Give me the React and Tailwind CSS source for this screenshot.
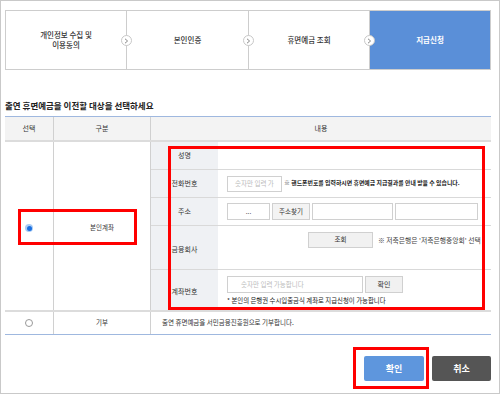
import React from "react";

function Chevron() {
  return (
    <div className="absolute right-[-6px] top-[24px] z-10 w-[11px] h-[11px] rounded-full bg-white border border-[#c8c8c8] flex items-center justify-center">
      <svg width="5" height="6" viewBox="0 0 5 6"><path d="M1 0.8 L3.6 3 L1 5.2" fill="none" stroke="#888" strokeWidth="1" /></svg>
    </div>
  );
}

function SubRow({ label, h, children, last }) {
  return (
    <div className={`flex ${h} ${last ? "" : "border-b border-[#d9d9d9]"}`}>
      <div className="w-[67px] bg-[#eff1f4] flex items-center justify-center text-[7px] text-[#333]">{label}</div>
      <div className="flex-1 pl-[9px] flex flex-col justify-center">{children}</div>
    </div>
  );
}

export default function App() {
  return (
    <div className="relative w-[500px] h-[394px] border border-[#c9c9c9] bg-white font-['Noto_Sans_CJK_KR',sans-serif] text-[#333] overflow-hidden">
      {/* steps */}
      <div className="ml-[4px] mt-[9px] w-[486px] h-[60px] border border-[#cdcdcd] flex">
        <div className="relative w-[121px] border-r border-[#cdcdcd] flex items-center justify-center text-center text-[7.5px] leading-[10px] font-medium text-[#333]">
          <span>개인정보 수집 및<br />이용동의</span>
          <Chevron />
        </div>
        <div className="relative w-[122px] border-r border-[#cdcdcd] flex items-center justify-center text-[7.5px] font-medium text-[#333]">
          본인인증
          <Chevron />
        </div>
        <div className="relative w-[121px] border-r border-[#cdcdcd] flex items-center justify-center text-[7.5px] font-medium text-[#333]">
          휴면예금 조회
          <Chevron />
        </div>
        <div className="w-[120px] bg-[#5a8fd8] flex items-center justify-center text-[7.5px] font-bold text-white">
          지급신청
        </div>
      </div>

      {/* title */}
      <div className="mt-[29px] pl-[4px] h-[12px] leading-[12px] text-[8.5px] font-bold text-[#222]">
        출연 휴면예금을 이전할 대상을 선택하세요
      </div>

      {/* table */}
      <div className="ml-[4px] mt-[5px] w-[486px]">
        <div className="border-t border-[#9fb8df]">
          <div className="flex h-[25px] bg-[#f3f3f3] border-b-2 border-[#dcdcdc] text-[7px] text-[#333]">
            <div className="w-[49px] border-r border-[#d0d0d0] flex items-center justify-center">선택</div>
            <div className="w-[97px] border-r border-[#d0d0d0] flex items-center justify-center">구분</div>
            <div className="flex-1 flex items-center justify-center">내용</div>
          </div>

          <div className="flex h-[168px]">
            <div className="w-[49px] border-r border-[#d0d0d0] flex items-center justify-center pt-[4px]">
              <div className="w-[8px] h-[8px] rounded-full bg-[#a9ccf5] flex items-center justify-center">
                <div className="w-[5px] h-[5px] rounded-full bg-[#1a6fe0]" />
              </div>
            </div>
            <div className="w-[97px] border-r border-[#d0d0d0] flex items-center justify-center pt-[4px] text-[6.5px] text-[#333]">
              본인계좌
            </div>
            <div className="flex-1 flex flex-col">
              <SubRow label="성명" h="h-[28px]" />
              <SubRow label="전화번호" h="h-[28px]">
                <div className="flex items-center gap-[2px]">
                  <div className="w-[55px] h-[16px] border border-[#d0d0d0] bg-white text-[6.5px] text-[#bbb] flex items-center pl-[7px] overflow-hidden whitespace-nowrap">숫자만 입력 가</div>
                  <span className="text-[5.9px] font-bold text-[#222] whitespace-nowrap">※ 핸드폰번호를 입력하시면 휴면예금 지급결과를 안내 받을 수 있습니다.</span>
                </div>
              </SubRow>
              <SubRow label="주소" h="h-[28px]">
                <div className="flex items-center gap-[2px]">
                  <div className="w-[43px] h-[17px] border border-[#d0d0d0] bg-white text-[6.5px] text-[#555] flex items-center justify-center">...</div>
                  <div className="w-[38px] h-[17px] border border-[#d0d0d0] bg-[#f3f3f3] text-[6.5px] text-[#333] flex items-center justify-center">주소찾기</div>
                  <div className="w-[81px] h-[17px] border border-[#d0d0d0] bg-white" />
                  <div className="w-[83px] h-[17px] border border-[#d0d0d0] bg-white" />
                </div>
              </SubRow>
              <div className="flex h-[44px] border-b border-[#d9d9d9]">
                <div className="w-[67px] bg-[#eff1f4] flex items-center justify-center text-[7px] text-[#333] pt-[4px]">금융회사</div>
                <div className="flex-1 pt-[6px] pl-[90px] flex items-start gap-[5px] overflow-hidden">
                  <div className="shrink-0 w-[65px] h-[16px] border border-[#d0d0d0] bg-[#f1f1f1] text-[6.5px] text-[#333] flex items-center justify-center">조회</div>
                  <span className="text-[6.8px] text-[#444] whitespace-nowrap leading-[16px]">※ 저축은행은 '저축은행중앙회' 선택</span>
                </div>
              </div>
              <div className="flex h-[40px]">
                <div className="w-[67px] bg-[#eff1f4] flex items-center justify-center text-[7px] text-[#333] pt-[2px]">계좌번호</div>
                <div className="flex-1 pl-[9px] pt-[6px] flex flex-col gap-[3px]">
                  <div className="flex items-center gap-[2px]">
                    <div className="w-[136px] h-[17px] border border-[#d0d0d0] bg-white text-[6.5px] text-[#bbb] flex items-center pl-[13px]">숫자만 입력 가능합니다</div>
                    <div className="w-[38px] h-[17px] border border-[#d0d0d0] bg-[#f1f1f1] text-[7px] text-[#333] flex items-center justify-center">확인</div>
                  </div>
                  <span className="text-[6.4px] text-[#222] whitespace-nowrap leading-[9px]">* 본인의 은행권 수시입출금식 계좌로 지급신청이 가능합니다</span>
                </div>
              </div>
            </div>
          </div>
          <div className="h-[2px] bg-[#dcdcdc]" />
          <div className="flex h-[23px] border-b border-[#9fb8df]">
            <div className="w-[49px] border-r border-[#d0d0d0] flex items-center justify-center">
              <div className="w-[8px] h-[8px] rounded-full border border-[#999] bg-white" />
            </div>
            <div className="w-[97px] border-r border-[#d0d0d0] flex items-center justify-center text-[6.5px] text-[#333]">기부</div>
            <div className="flex-1 flex items-center pl-[11px] text-[6.5px] text-[#333] whitespace-nowrap">출연 휴면예금을 서민금융진흥원으로 기부합니다.</div>
          </div>
        </div>

        <div className="mt-[21px] flex justify-end gap-[8px]">
          <div className="w-[60px] h-[25px] rounded-[2px] bg-[#5e96dd] text-white text-[9px] font-bold flex items-center justify-center">확인</div>
          <div className="w-[59px] h-[25px] rounded-[2px] bg-[#555555] text-white text-[9px] font-bold flex items-center justify-center">취소</div>
        </div>
      </div>

      {/* red annotation boxes */}
      <div className="absolute left-[167px] top-[145px] w-[317px] h-[164px] border-[3px] border-[#ff0000] pointer-events-none" />
      <div className="absolute left-[17px] top-[208px] w-[119px] h-[36px] border-[3px] border-[#ff0000] pointer-events-none" />
      <div className="absolute left-[352px] top-[346px] w-[76px] h-[42px] border-[3px] border-[#ff0000] pointer-events-none" />
    </div>
  );
}
